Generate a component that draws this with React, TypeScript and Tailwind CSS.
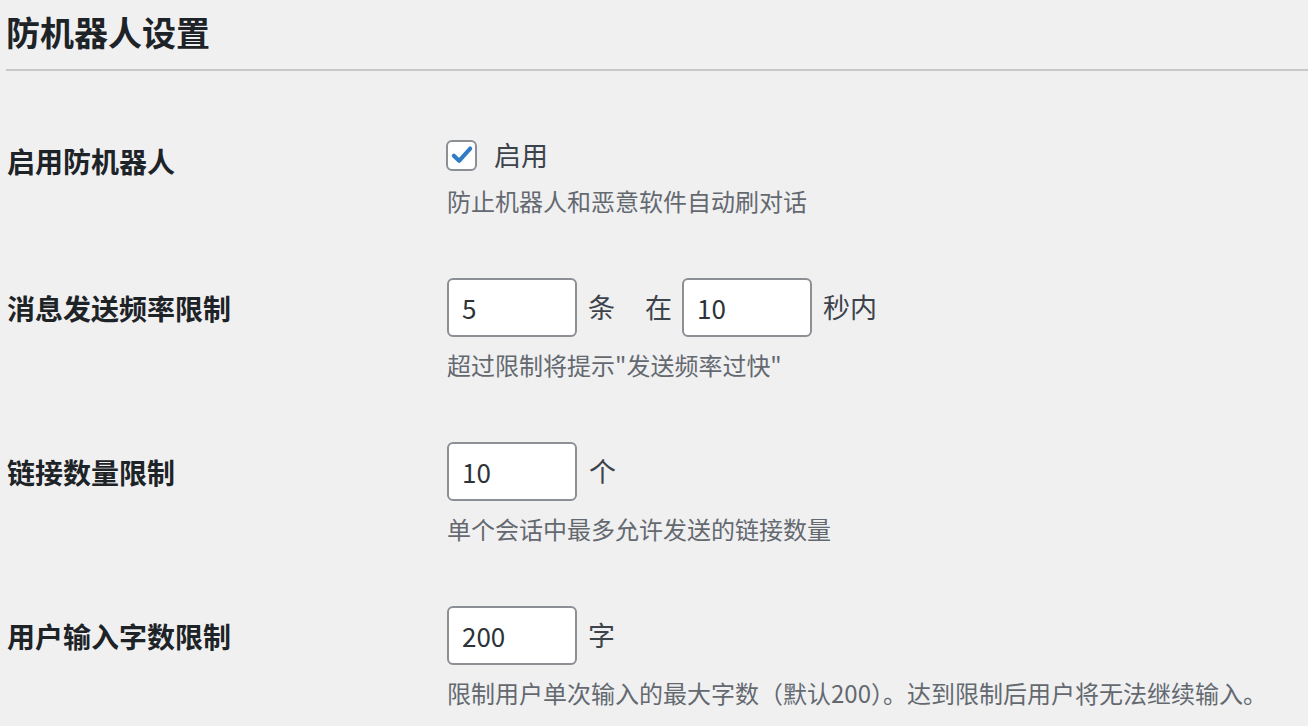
import type { ReactNode } from 'react';

const font = { fontFamily: '"Noto Sans CJK SC", "Noto Sans", sans-serif' };

function NumberInput({ value }: { value: string }) {
  return (
    <input
      type="text"
      defaultValue={value}
      className="h-[59px] w-[130px] rounded-[6px] border-2 border-[#8c8f94] bg-white px-[13px] text-[26px] text-[#2c3338] outline-none"
      style={font}
    />
  );
}

function Row({
  label,
  children,
  desc,
  checkbox = false,
}: {
  label: string;
  children: ReactNode;
  desc: string;
  checkbox?: boolean;
}) {
  return (
    <div className="flex pt-[28px] pb-[32px]">
      <div
        className={
          checkbox
            ? 'mt-[6px] flex h-[40px] w-[440px] shrink-0 items-center'
            : 'flex h-[59px] w-[440px] shrink-0 items-center'
        }
      >
        <span className="text-[28px] font-bold text-[#1d2327]">{label}</span>
      </div>
      <div className="flex flex-col">
        <div
          className={
            checkbox
              ? 'flex h-[40px] items-center text-[27px] text-[#3c434a]'
              : 'flex h-[59px] items-center text-[27px] text-[#3c434a]'
          }
        >
          {children}
        </div>
        <p
          className={
            checkbox
              ? 'mt-[9px] text-[24px] leading-[34px] text-[#646970]'
              : 'mt-[11px] text-[24px] leading-[34px] text-[#646970]'
          }
        >
          {desc}
        </p>
      </div>
    </div>
  );
}

export default function App() {
  return (
    <div className="min-h-[726px] w-full overflow-hidden bg-[#f0f0f1] pl-[6px]" style={font}>
      <h1 className="pt-[10px] text-[34px] font-bold leading-[44px] text-[#1d2327]">
        防机器人设置
      </h1>
      <div className="mt-[15px] h-[2px] bg-[#c8c8c8]" />

      <div className="mt-[36px] pl-[1px]">
        <Row label="启用防机器人" desc="防止机器人和恶意软件自动刷对话" checkbox>
          <label className="flex items-center">
            <span className="ml-[-1px] flex h-[31px] w-[31px] items-center justify-center rounded-[6px] border-2 border-[#8c8f94] bg-white">
              <svg viewBox="0 0 20 20" className="h-[24px] w-[24px]" aria-hidden>
                <path
                  d="M3.2 10.6 L7.6 14.8 L16.8 4.6"
                  fill="none"
                  stroke="#2f7bc4"
                  strokeWidth="3.4"
                  strokeLinecap="round"
                  strokeLinejoin="round"
                />
              </svg>
            </span>
            <span className="ml-[17px]">启用</span>
          </label>
        </Row>

        <Row label="消息发送频率限制" desc={'超过限制将提示"发送频率过快"'}>
          <NumberInput value="5" />
          <span className="ml-[11px]">条</span>
          <span className="ml-[30px] mr-[10px]">在</span>
          <NumberInput value="10" />
          <span className="ml-[11px]">秒内</span>
        </Row>

        <Row label="链接数量限制" desc="单个会话中最多允许发送的链接数量">
          <NumberInput value="10" />
          <span className="ml-[12px]">个</span>
        </Row>

        <Row
          label="用户输入字数限制"
          desc="限制用户单次输入的最大字数（默认200）。达到限制后用户将无法继续输入。"
        >
          <NumberInput value="200" />
          <span className="ml-[11px]">字</span>
        </Row>
      </div>
    </div>
  );
}
